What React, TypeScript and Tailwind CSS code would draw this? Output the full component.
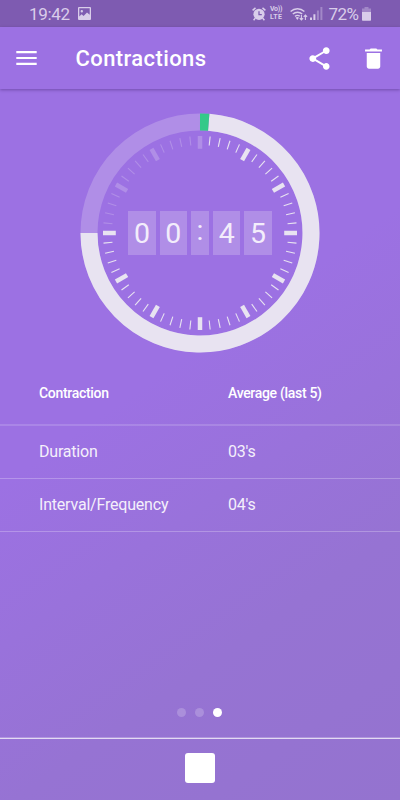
import type { ReactNode } from "react";
import clsx from "clsx";

const CENTER = 120;

// point on the dial, 0deg is 12 o'clock, clockwise
function polar(radius: number, deg: number) {
  const rad = ((deg - 90) * Math.PI) / 180;
  return [CENTER + radius * Math.cos(rad), CENTER + radius * Math.sin(rad)];
}

function arc(radius: number, from: number, to: number) {
  const [x1, y1] = polar(radius, from);
  const [x2, y2] = polar(radius, to);
  return `M${x1} ${y1}A${radius} ${radius} 0 ${to - from > 180 ? 1 : 0} 1 ${x2} ${y2}`;
}

function StatusBar() {
  return (
    <div className="flex h-[27px] shrink-0 items-center bg-[#7e5bb1] pl-[29px] text-[17px] text-[#d9cdea]">
      <span className="w-[41px] pt-px leading-none tracking-[-0.3px]">19:42</span>
      <svg className="ml-2 h-[13px] w-[13px]" viewBox="0 0 13 13">
        <path
          fill="currentColor"
          fillRule="evenodd"
          d="M1 0h11a1 1 0 0 1 1 1v11a1 1 0 0 1-1 1H1a1 1 0 0 1-1-1V1a1 1 0 0 1 1-1ZM1.3 1.3V9.5L3.6 7.3l2 1.6L9 5.4l2.7 2.4V1.3ZM3.8 3a1.2 1.2 0 1 1 0 2.4 1.2 1.2 0 0 1 0-2.4Z"
        />
      </svg>

      <svg className="ml-[161px] h-[14px] w-[14px]" viewBox="0 0 14 14" fill="none" stroke="currentColor">
        <circle cx="7" cy="7.3" r="5.6" fill="currentColor" stroke="none" />
        <path d="M7 4.2v3.5h2.8" stroke="#7e5bb1" strokeWidth="1.3" />
        <path d="M.6 3.4 3.5.9M13.4 3.4 10.5.9M3.2 11.3l-1.6 1.9M10.8 11.3l1.6 1.9" strokeWidth="1.5" />
      </svg>
      <span className="ml-[4px] flex w-[14px] flex-col text-[7px] leading-[7.5px] font-bold">
        <span className="tracking-[-0.3px]">Vo))</span>
        <span className="tracking-[0.3px]">LTE</span>
      </span>
      <svg className="ml-[6px] h-[14px] w-[18px]" viewBox="0 0 18 14" fill="none" stroke="currentColor" strokeWidth="1.4">
        <path d="M.6 4.4a10.2 10.2 0 0 1 13.8 0M2.8 7a7 7 0 0 1 9.4 0M5 9.4a4 4 0 0 1 4.8-.2" />
        <path d="M5.6 10.5a3 3 0 0 1 3.4 0L7.3 13Z" fill="currentColor" stroke="none" />
        <path d="M11.4 8v5M9.7 11.2l1.7 1.8 1.7-1.8M15.4 13V8M13.7 9.8 15.4 8l1.7 1.8" strokeWidth="1.1" />
      </svg>
      <svg className="ml-[2px] h-[13px] w-[13px]" viewBox="0 0 13 13" fill="currentColor">
        <path d="M0 10.5h2V13H0ZM3.4 7.3h2V13h-2Z" />
        <path d="M6.9 3.6h2V13h-2ZM10.4 0h2v13h-2Z" opacity="0.4" />
      </svg>
      <span className="ml-[5.5px] w-[30px] pt-px leading-none tracking-[-0.5px]">72%</span>
      <svg className="ml-[3.5px] h-[14px] w-[9px]" viewBox="0 0 9 14" fill="currentColor">
        <path d="M2.5 0h4v1.5H9V5H0V1.5h2.5Z" opacity="0.4" />
        <path d="M0 5h9v8a.7.7 0 0 1-.7.7H.7A.7.7 0 0 1 0 13Z" />
      </svg>
    </div>
  );
}

function AppBar() {
  return (
    <header className="z-10 flex h-[62px] shrink-0 items-center bg-[#9c71e3] pl-[16px] text-white shadow-[0_1px_3px_rgba(50,20,90,0.4)]">
      <button aria-label="menu">
        <svg className="h-[14px] w-[21px]" viewBox="0 0 21 14" fill="currentColor">
          <path d="M.3 0h20.4v2.2H.3ZM.3 5.9h20.4v2.2H.3ZM.3 11.8h20.4v2.2H.3Z" />
        </svg>
      </button>
      <h1 className="ml-[38.5px] w-[131px] text-[22px] font-medium tracking-[0.4px] whitespace-nowrap">Contractions</h1>
      <button aria-label="share" className="ml-[99.5px]">
        <svg className="h-[27px] w-[27px]" viewBox="0 0 24 24" fill="currentColor">
          <path d="M18 16.08c-.76 0-1.44.3-1.96.77L8.91 12.7c.05-.23.09-.46.09-.7s-.04-.47-.09-.7l7.05-4.11c.54.5 1.25.81 2.04.81 1.66 0 3-1.34 3-3s-1.34-3-3-3-3 1.34-3 3c0 .24.04.47.09.7L8.04 9.81C7.5 9.31 6.79 9 6 9c-1.66 0-3 1.34-3 3s1.34 3 3 3c.79 0 1.5-.31 2.04-.81l7.12 4.16c-.05.21-.08.43-.08.65 0 1.61 1.31 2.92 2.92 2.92s2.92-1.31 2.92-2.92-1.31-2.92-2.92-2.92z" />
        </svg>
      </button>
      <button aria-label="delete" className="ml-[26.5px]">
        <svg className="h-[27px] w-[27px]" viewBox="0 0 24 24" fill="currentColor">
          <path d="M6 19c0 1.1.9 2 2 2h8c1.1 0 2-.9 2-2V7H6v12zM19.5 4h-4l-1-1h-5l-1 1h-4v1.7h15V4z" />
        </svg>
      </button>
    </header>
  );
}

function Digit({ children, narrow }: { children: ReactNode; narrow?: boolean }) {
  return (
    <span
      className={clsx(
        "flex h-11 items-center justify-center bg-[#b08ee7] text-[28.5px] leading-none text-[#f3edfb]",
        narrow ? "w-[18px] pb-1" : "w-[27.3px] pt-0.5"
      )}
    >
      {children}
    </span>
  );
}

function Timer() {
  const ticks = Array.from({ length: 60 }, (_, i) => i);

  return (
    <div className="relative mt-6 flex h-60 w-60 shrink-0 items-center justify-center self-center">
      <svg className="absolute inset-0" width="240" height="240" viewBox="0 0 240 240" fill="none">
        <circle cx={CENTER} cy={CENTER} r="111" stroke="#b08ee7" strokeWidth="17" />
        <path d={arc(111, 4.5, 270)} stroke="#e8e3f1" strokeWidth="17" />
        <path d={arc(111, 0, 4.5)} stroke="#33c989" strokeWidth="17" />
        {ticks.map((i) => {
          const major = i % 5 === 0;
          return (
            <line
              key={i}
              x1={CENTER}
              x2={CENTER}
              y1={23}
              y2={major ? 35.8 : 32}
              stroke={i > 0 && i <= 45 ? "#e8e3f1" : "#b08ee7"}
              strokeWidth={major ? 4.5 : 1.1}
              transform={`rotate(${i * 6} ${CENTER} ${CENTER})`}
            />
          );
        })}
      </svg>
      <div className="relative flex gap-1">
        <Digit>0</Digit>
        <Digit>0</Digit>
        <Digit narrow>:</Digit>
        <Digit>4</Digit>
        <Digit>5</Digit>
      </div>
    </div>
  );
}

const rows = [
  { name: "Duration", value: "03's" },
  { name: "Interval/Frequency", value: "04's" },
];

export default function App() {
  return (
    <div className="flex h-[800px] w-[400px] flex-col overflow-hidden bg-[linear-gradient(145deg,#9c71e3_0%,#9c71e3_45%,#9673d3_75%,#9473cf_100%)] font-['Roboto',sans-serif]">
      <StatusBar />
      <AppBar />
      <Timer />

      <div className="mt-2 text-white">
        <div className="grid h-[65px] grid-cols-[189px_1fr] items-center border-b-2 border-white/15 pt-px pl-[39px] text-[14px] font-medium tracking-[-0.31px]">
          <span>Contraction</span>
          <span>Average (last 5)</span>
        </div>
        {rows.map((row) => (
          <div
            key={row.name}
            className="grid h-[53px] grid-cols-[189px_1fr] items-center border-b border-white/25 pl-[39px] text-base tracking-[-0.2px] text-[#f4effb]"
          >
            <span>{row.name}</span>
            <span>{row.value}</span>
          </div>
        ))}
      </div>

      <div className="mt-auto mb-[21px] flex justify-center gap-[9px] pr-[0.8px]">
        <span className="h-[9px] w-[9px] rounded-full bg-white/20" />
        <span className="h-[9px] w-[9px] rounded-full bg-white/20" />
        <span className="h-[9px] w-[9px] rounded-full bg-white" />
      </div>
      <footer className="flex h-[62px] shrink-0 items-center justify-center border-t border-[#e3daf3] shadow-[0_-1px_0_rgba(255,255,255,0.25)]">
        <button aria-label="stop" className="mb-[3px] h-[30px] w-[30px] rounded-[3px] bg-white" />
      </footer>
    </div>
  );
}
